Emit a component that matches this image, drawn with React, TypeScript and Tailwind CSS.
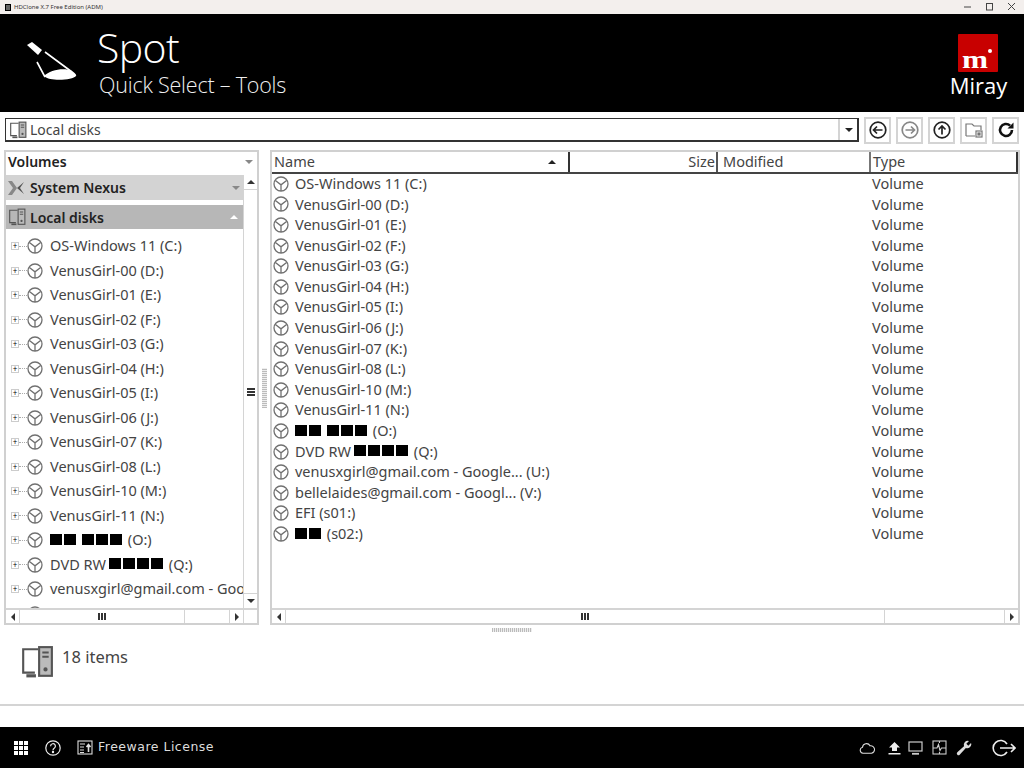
import React from 'react';

const volumes: React.ReactNode[] = [
  'OS-Windows 11 (C:)',
  'VenusGirl-00 (D:)',
  'VenusGirl-01 (E:)',
  'VenusGirl-02 (F:)',
  'VenusGirl-03 (G:)',
  'VenusGirl-04 (H:)',
  'VenusGirl-05 (I:)',
  'VenusGirl-06 (J:)',
  'VenusGirl-07 (K:)',
  'VenusGirl-08 (L:)',
  'VenusGirl-10 (M:)',
  'VenusGirl-11 (N:)',
];

const Blocks = ({ groups }: { groups: number[] }) => (
  <span className="mb-[4px] inline-flex gap-[6px] align-middle">
    {groups.map((count, i) => (
      <span key={i} className="flex gap-[2px]">
        {Array.from({ length: count }).map((_, j) => (
          <span key={j} className="h-[11px] w-[12px] bg-black" />
        ))}
      </span>
    ))}
  </span>
);

const leftExtra: React.ReactNode[] = [
  <><Blocks groups={[2, 3]} /> <span className="ml-[2px]">(O:)</span></>,
  <>DVD RW<span className="ml-[3px]"><Blocks groups={[4]} /></span> <span className="ml-[2px]">(Q:)</span></>,
  'venusxgirl@gmail.com - Google Drive (U:)',
  'bellelaides@gmail.com - Google Drive (V:)',
];

const rightExtra: React.ReactNode[] = [
  <><Blocks groups={[2, 3]} /> <span className="ml-[2px]">(O:)</span></>,
  <>DVD RW<span className="ml-[3px]"><Blocks groups={[4]} /></span> <span className="ml-[2px]">(Q:)</span></>,
  'venusxgirl@gmail.com - Google... (U:)',
  'bellelaides@gmail.com - Googl... (V:)',
  'EFI (s01:)',
  <><Blocks groups={[2]} /> <span className="ml-[2px]">(s02:)</span></>,
];

const VolumeIcon = () => (
  <svg width="16" height="16" viewBox="0 0 16 16" fill="none" stroke="#707070" strokeWidth="1.300" className="shrink-0">
    <circle cx="8" cy="8" r="7" />
    <path d="M2.400 4.400 8 8.800l5.600-4.400M8 8.800V15" />
  </svg>
);

const ComputerIcon = ({ size = 18 }: { size?: number }) => (
  <svg width={size} height={size} viewBox="0 0 32 32" fill="none" stroke="#555" strokeWidth="2">
    <path d="M14 26H3V4h14" />
    <path d="M6 29h9" strokeWidth="3" />
    <rect x="18" y="2" width="12" height="27" fill="#bbb" />
    <path d="M21 7h6M21 11h6" />
    <circle cx="24" cy="23" r="1" fill="#333" />
  </svg>
);

const Triangle = ({ dir, color = '#333' }: { dir: 'up' | 'down' | 'left' | 'right'; color?: string }) => {
  const points = {
    up: '0,5 4,1 8,5',
    down: '0,1 4,5 8,1',
    left: '5,0 1,4 5,8',
    right: '1,0 5,4 1,8',
  }[dir];
  const box = dir === 'up' || dir === 'down' ? '0 0 8 6' : '0 0 6 8';
  const w = dir === 'up' || dir === 'down' ? 8 : 6;
  const h = dir === 'up' || dir === 'down' ? 6 : 8;
  return (
    <svg width={w} height={h} viewBox={box}>
      <polygon points={points} fill={color} />
    </svg>
  );
};

const ToolButton = ({ children }: { children: React.ReactNode }) => (
  <button className="flex h-[27px] w-[27px] items-center justify-center border-2 border-[#d4d4d4] bg-white">
    {children}
  </button>
);

const ArrowCircle = ({ path, color }: { path: string; color: string }) => (
  <svg width="18" height="18" viewBox="0 0 18 18" fill="none" stroke={color} strokeWidth="1.700">
    <circle cx="9" cy="9" r="7.800" />
    <path d={path} />
  </svg>
);

const HScrollbar = ({ thumb, after }: { thumb: string; after: string }) => (
  <div className="flex h-[15px] min-w-0 flex-1 items-center border-t-2 border-[#d4d4d4] bg-white">
    <div className="flex h-full w-[14px] shrink-0 items-center justify-center border-r border-[#d4d4d4]">
      <Triangle dir="left" />
    </div>
    <div className={`flex h-full shrink-0 items-center justify-center border-r border-[#d4d4d4] ${thumb}`}>
      <div className="flex gap-[1px]">
        <span className="h-[7px] w-[2px] bg-[#333]" />
        <span className="h-[7px] w-[2px] bg-[#333]" />
        <span className="h-[7px] w-[2px] bg-[#333]" />
      </div>
    </div>
    <div className={`h-full shrink-0 border-r border-[#d4d4d4] ${after}`} />
    <div className="flex h-full flex-1 items-center justify-center">
      <Triangle dir="right" />
    </div>
  </div>
);

const HeaderCell = ({ className, children }: { className: string; children: React.ReactNode }) => (
  <div className={`flex h-[20px] shrink-0 items-center border-r-2 ${className}`}>{children}</div>
);

export default function App() {
  return (
    <div
      className="flex h-[768px] w-[1024px] flex-col overflow-hidden bg-white text-[14.5px] text-[#444]"
      style={{ fontFamily: '"Noto Sans", sans-serif' }}
    >
      {/* タイトルバー */}
      <div className="flex h-[14px] shrink-0 items-center bg-[#f3efed] pl-[5px] text-[#333]">
        <div className="mr-[3px] h-[7px] w-[6px] border border-black bg-[#666]" />
        <span className="text-[6px] leading-none">HDClone X.7 Free Edition (ADM)</span>
        <div className="ml-auto flex items-center">
          <svg width="12" height="10" viewBox="0 0 12 10" className="mr-[10px]"><path d="M2 5h7" stroke="#444" /></svg>
          <svg width="12" height="10" viewBox="0 0 12 10" className="mr-[10px]"><rect x="2.500" y="1.500" width="6" height="6.500" fill="none" stroke="#444" /></svg>
          <svg width="12" height="10" viewBox="0 0 12 10" className="mr-[6px]"><path d="M2 1l7 7M9 1L2 8" stroke="#444" /></svg>
        </div>
      </div>

      {/* ヘッダー */}
      <div className="flex h-[98px] shrink-0 bg-black pl-[26px] pr-[17px] text-white">
        <svg width="52" height="44" viewBox="0 0 52 44" className="mt-[27px]">
          <path d="M1 4 6 1l10 8-4 5z" fill="#fff" />
          <path d="M19 11l27 20M11 21l8 15" stroke="#fff" strokeWidth="1.600" fill="none" />
          <path d="M18 35c6-6 20-9 28-5 3 2 5 4 4 5-3 4-26 6-32 0z" fill="#fff" />
        </svg>
        <div className="ml-[19px] flex flex-col" style={{ fontFamily: '"Open Sans", sans-serif' }}>
          <div className="mt-[9px] text-[41px] font-light leading-[48px] tracking-[-0.6px]">Spot</div>
          <div className="ml-[2px] text-[21.5px] font-light leading-[28px] tracking-[-0.2px] text-[#f0f0f0]">
            Quick Select – Tools
          </div>
        </div>
        <div className="ml-auto mt-[20px] flex w-[57px] flex-col items-center">
          <div className="relative mr-[2px] h-[38px] w-[40px] rounded-[1px] bg-[#c80000]">
            <span
              className="absolute bottom-[0px] left-[4px] origin-left scale-x-[1.2] text-[26px] font-bold leading-[24px] text-white"
              style={{ fontFamily: '"Liberation Serif", serif' }}
            >
              m
            </span>
            <span className="absolute right-[6px] top-[15px] h-[4px] w-[4px] rounded-full bg-white" />
          </div>
          <div className="text-[22px] leading-[26px]" style={{ fontFamily: '"Open Sans", sans-serif' }}>Miray</div>
        </div>
      </div>

      {/* ツールバー */}
      <div className="flex h-[38px] shrink-0 items-center pb-[2px] pl-[5px] pr-[4px]">
        <div className="flex h-[24px] w-[854px] items-center border border-b-2 border-r-2 border-[#333]">
          <div className="ml-[3px] mr-[3px]"><ComputerIcon /></div>
          <span className="flex-1 text-[14px]">Local disks</span>
          <div className="flex h-full w-[19px] items-center justify-center border-l-2 border-[#d4d4d4]">
            <Triangle dir="down" color="#222" />
          </div>
        </div>
        <div className="ml-[5px] flex gap-[5px]">
          <ToolButton><ArrowCircle color="#222" path="M13.500 9h-9M8 5.500 4.500 9 8 12.500" /></ToolButton>
          <ToolButton><ArrowCircle color="#888" path="M4.500 9h9M10 5.500 13.500 9 10 12.500" /></ToolButton>
          <ToolButton><ArrowCircle color="#222" path="M9 13.500V5M5.500 8.500 9 5l3.500 3.500" /></ToolButton>
          <ToolButton>
            <svg width="18" height="18" viewBox="0 0 18 18" fill="none" stroke="#777" strokeWidth="1.200">
              <path d="M1 15V3h6l2 2h7v4M1 15h9" />
              <rect x="11" y="10" width="6" height="6" />
              <rect x="13" y="12" width="2" height="2" fill="#777" />
            </svg>
          </ToolButton>
          <ToolButton>
            <svg width="18" height="18" viewBox="0 0 18 18" fill="none" stroke="#111" strokeWidth="2.600">
              <path d="M15 9a6 6 0 1 1-1.900-4.400" />
              <path d="M16.500 1.500v6h-6z" fill="#111" stroke="none" />
            </svg>
          </ToolButton>
        </div>
      </div>

      {/* メインパネル */}
      <div className="flex h-[475px] shrink-0 pl-[4px] pr-[4px]">
        {/* 左パネル */}
        <div className="flex w-[255px] shrink-0 flex-col border-2 border-[#d0d0d0]">
          <div className="flex h-[23px] shrink-0 items-center justify-between pb-[4px] pl-[2px] pr-[4px]">
            <span className="text-[14px] font-semibold text-[#222]">Volumes</span>
            <Triangle dir="down" color="#888" />
          </div>
          <div className="flex min-h-0 flex-1">
            <div className="flex min-w-0 flex-1 flex-col overflow-hidden">
              <div className="flex h-[25px] shrink-0 items-center bg-[#d3d3d3] pl-[2px] pr-[3px] text-[14px] font-semibold text-[#222]">
                <svg width="16" height="14" viewBox="0 0 16 14" className="mr-[6px]">
                  <path d="M0 0h4l5 7-5 7H0l5-7z" fill="#888" />
                  <path d="M16 1 9 7l7 6-4-6z" fill="#555" />
                </svg>
                <span>System Nexus</span>
                <span className="ml-auto"><Triangle dir="down" color="#888" /></span>
              </div>
              <div className="mt-[5px] flex h-[24px] shrink-0 items-center bg-[#b7b7b7] pl-[2px] pr-[5px] text-[14px] font-semibold text-[#222]">
                <div className="mr-[4px]"><ComputerIcon /></div>
                <span>Local disks</span>
                <span className="ml-auto"><Triangle dir="up" color="#fff" /></span>
              </div>
              <div className="min-h-0 flex-1 overflow-hidden pt-[5px]">
                {[...volumes, ...leftExtra].map((label, i) => (
                  <div key={i} className="flex h-[24.5px] items-center whitespace-nowrap pl-[5px]">
                    <span className="flex h-[8px] w-[8px] shrink-0 items-center justify-center border border-[#ccc] text-[8px] leading-none text-black">+</span>
                    <span className="w-[8px] shrink-0 border-t border-dotted border-[#aaa]" />
                    <VolumeIcon />
                    <span className="ml-[7px]">{label}</span>
                  </div>
                ))}
              </div>
            </div>
            {/* 縦スクロールバー */}
            <div className="flex w-[14px] shrink-0 flex-col items-center border-l border-[#d4d4d4]">
              <div className="flex h-[15px] w-full items-center justify-center border-b border-[#d4d4d4]"><Triangle dir="up" /></div>
              <div className="flex w-full flex-1 flex-col items-center justify-center gap-[1px]">
                <span className="h-[2px] w-[8px] bg-[#333]" />
                <span className="h-[2px] w-[8px] bg-[#333]" />
                <span className="h-[2px] w-[8px] bg-[#333]" />
              </div>
              <div className="flex h-[15px] w-full items-center justify-center border-t border-[#d4d4d4]"><Triangle dir="down" /></div>
            </div>
          </div>
          <div className="flex h-[15px] shrink-0">
            <HScrollbar thumb="w-[165px]" after="w-[45px]" />
            <div className="w-[14px] border-l border-t-2 border-[#d4d4d4]" />
          </div>
        </div>

        {/* スプリッター */}
        <div className="flex w-[11px] shrink-0 items-center justify-center">
          <div className="h-[40px] w-[5px] bg-[repeating-linear-gradient(0deg,#bbb_0,#bbb_1px,#eee_1px,#eee_2px)]" />
        </div>

        {/* 右パネル */}
        <div className="flex min-w-0 flex-1 flex-col border-2 border-[#d0d0d0]">
          <div className="flex h-[22px] shrink-0 items-start border-b-2 border-[#444]">
            <HeaderCell className="w-[298px] justify-between border-[#333] pl-[2px] pr-[12px] text-[#444]">
              <span>Name</span>
              <Triangle dir="up" color="#222" />
            </HeaderCell>
            <HeaderCell className="w-[148px] justify-end border-[#555] pr-[1px]">Size</HeaderCell>
            <HeaderCell className="w-[153px] border-[#777] pl-[5px]">Modified</HeaderCell>
            <div className="flex h-[20px] flex-1 items-center border-r-2 border-[#333] pl-[2px]">Type</div>
          </div>
          <div className="mt-[-0.5px] min-h-0 flex-1 overflow-hidden">
            {[...volumes, ...rightExtra].map((label, i) => (
              <div key={i} className="flex h-[20.6px] items-center whitespace-nowrap pl-[1px]">
                <VolumeIcon />
                <span className="ml-[6px] w-[577px]">{label}</span>
                <span>Volume</span>
              </div>
            ))}
          </div>
          <div className="flex h-[15px] shrink-0">
            <HScrollbar thumb="w-[599px]" after="w-[120px]" />
          </div>
        </div>
      </div>

      {/* ステータス */}
      <div className="flex h-[81px] shrink-0 flex-col border-b-2 border-[#d4d4d4]">
        <div className="mx-auto mt-[3px] h-[4px] w-[40px] bg-[repeating-linear-gradient(90deg,#bbb_0,#bbb_1px,#eee_1px,#eee_2px)]" />
        <div className="ml-[20px] mt-[13px] flex items-start">
          <ComputerIcon size={34} />
          <span className="ml-[8px] mt-[1px] text-[16.5px] leading-[22px] text-[#444]">18 items</span>
        </div>
      </div>
      <div className="h-[21px] shrink-0" />

      {/* フッター */}
      <div className="flex min-h-0 flex-1 items-center bg-black pl-[14px] pr-[8px] text-white">
        <div className="grid grid-cols-3 gap-[1px]">
          {Array.from({ length: 9 }).map((_, i) => (
            <span key={i} className="h-[4px] w-[4px] bg-white" />
          ))}
        </div>
        <svg width="16" height="16" viewBox="0 0 16 16" fill="none" stroke="#eee" strokeWidth="1.200" className="ml-[17px]">
          <circle cx="8" cy="8" r="7.200" />
          <path d="M5.600 6.200a2.400 2.400 0 1 1 3.600 2c-.8.500-1.200 1-1.200 2" />
          <circle cx="8" cy="12" r=".6" fill="#eee" />
        </svg>
        <svg width="16" height="15" viewBox="0 0 16 15" fill="none" stroke="#ddd" strokeWidth="1.100" className="ml-[16px]">
          <rect x="1" y="1" width="14" height="13" />
          <path d="M3 4h5M3 7h4M3 10h4M3 12.500h4" />
          <path d="M11.500 5v7M9.500 7l2-2.500 2 2.500" strokeWidth="1.600" />
        </svg>
        <span className="ml-[5px] text-[12.5px] tracking-[0.5px] text-[#ddd]" style={{ fontFamily: '"DejaVu Sans", sans-serif' }}>
          Freeware License
        </span>
        <div className="ml-auto flex items-center">
          <svg width="16" height="12" viewBox="0 0 16 12" fill="none" stroke="#ddd" strokeWidth="1.100">
            <path d="M4 11.200a3 3 0 0 1-.5-5.900 4 4 0 0 1 7.500-1.500 3.500 3.500 0 0 1 1.500 7.400z" />
          </svg>
          <svg width="15" height="14" viewBox="0 0 15 14" fill="#eee" className="ml-[12px]">
            <path d="M7.500 1 13 6.500H10V10H5V6.500H2zM1.500 12h12v1.500h-12z" />
          </svg>
          <svg width="15" height="14" viewBox="0 0 15 14" fill="none" stroke="#ccc" strokeWidth="1.200" className="ml-[6px]">
            <rect x="1" y="1" width="13" height="9" />
            <path d="M4 12.800h7" strokeWidth="1.800" />
          </svg>
          <svg width="15" height="15" viewBox="0 0 15 15" fill="none" stroke="#ccc" strokeWidth="1.100" className="ml-[9px]">
            <rect x="1" y="1" width="13" height="13" />
            <path d="M1 8h4l1.500-3.500 1.500 6 1.500-2.500H14M7.500 1v2M7.500 12v2" />
          </svg>
          <svg width="16" height="16" viewBox="0 0 24 24" fill="#ddd" className="ml-[9px]">
            <path d="M23 6.500a6 6 0 0 1-8.200 5.500L5.500 22a2.400 2.400 0 0 1-3.500-3.500L12 9.200A6 6 0 0 1 19.500 1.500L15.500 5.500l3 3 4-4a6 6 0 0 1 .5 2z" />
          </svg>
          <svg width="24" height="18" viewBox="0 0 24 18" fill="none" stroke="#eee" strokeWidth="1.600" className="ml-[20px]">
            <path d="M15 5a7.500 7.500 0 1 0 0 8M8 9h15M19 5l4 4-4 4" />
          </svg>
        </div>
      </div>
    </div>
  );
}
